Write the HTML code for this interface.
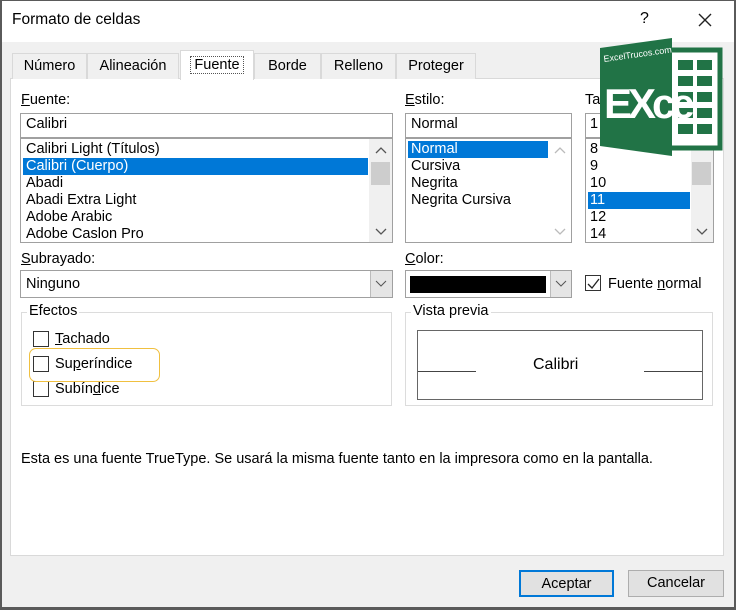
<!DOCTYPE html>
<html><head><meta charset="utf-8"><style>
*{margin:0;padding:0;box-sizing:border-box}
body{width:736px;height:610px;background:#f0f0f0;font-family:"Liberation Sans",sans-serif;font-size:14.5px;color:#000;position:relative;overflow:hidden}
.a{position:absolute;white-space:nowrap}
.box{position:absolute;background:#fff;border:1px solid #a0a0a0}
.tab{position:absolute;top:53px;height:26px;border:1px solid #d9d9d9;border-bottom:none;background:#f0f0f0;text-align:center;line-height:25px}
.hl{position:absolute;background:#0078d7;color:#fff}
.sb{position:absolute;background:#f0f0f0}
.cb{position:absolute;width:16px;height:16px;border:1px solid #333;background:#fff}
.grp{position:absolute;border:1px solid #dcdcdc}
.btn{position:absolute;top:570px;height:27px;border:1px solid #adadad;background:#e1e1e1;text-align:center;line-height:25px}
</style></head><body>
<div class="a" style="left:0;top:0;width:736px;height:42px;background:#fff"></div>
<div class="a" style="left:0;top:0;width:736px;height:610px;border:1px solid #5a5a5a;border-width:1px 2px 3px 2px"></div>
<div class="a" style="left:12px;top:11px;font-size:15.5px">Formato de celdas</div>
<div class="a" style="left:640px;top:10px;font-size:16px">?</div>
<svg class="a" style="left:698px;top:13px" width="14" height="14"><path d="M1 1L13 13M13 1L1 13" stroke="#222" stroke-width="1.4"/></svg>

<div class="a" style="left:10px;top:78px;width:714px;height:478px;background:#fff;border:1px solid #d9d9d9"></div>
<div class="tab" style="left:12px;width:75px">Número</div>
<div class="tab" style="left:87px;width:92px">Alineación</div>
<div class="tab" style="left:180px;width:74px;top:50px;height:30px;background:#fff;line-height:29px"><span style="border:1px dotted #555;padding:0 3px">Fuente</span></div>
<div class="tab" style="left:254px;width:67px">Borde</div>
<div class="tab" style="left:321px;width:75px">Relleno</div>
<div class="tab" style="left:396px;width:80px">Proteger</div>

<div class="a" style="left:21px;top:92px"><u>F</u>uente:</div>
<div class="box" style="left:20px;top:113px;width:373px;height:25px"></div>
<div class="a" style="left:26px;top:116px">Calibri</div>
<div class="box" style="left:20px;top:138px;width:373px;height:105px"></div>
<div class="hl" style="left:23px;top:158px;width:345px;height:17px"></div>
<div class="sb" style="left:369px;top:139px;width:23px;height:103px"></div>
<div class="a" style="left:371px;top:162px;width:19px;height:23px;background:#cdcdcd"></div>
<svg class="a" style="left:375px;top:146px" width="12" height="8"><path d="M1 7L6 2L11 7" fill="none" stroke="#555" stroke-width="1.3"/></svg>
<svg class="a" style="left:375px;top:228px" width="12" height="8"><path d="M1 1L6 6L11 1" fill="none" stroke="#555" stroke-width="1.3"/></svg>
<div class="a" style="left:26px;top:141px;line-height:17px">Calibri Light (Títulos)<br><span style="color:#fff">Calibri (Cuerpo)</span><br>Abadi<br>Abadi Extra Light<br>Adobe Arabic<br>Adobe Caslon Pro</div>

<div class="a" style="left:405px;top:92px"><u>E</u>stilo:</div>
<div class="box" style="left:405px;top:113px;width:167px;height:25px"></div>
<div class="a" style="left:411px;top:116px">Normal</div>
<div class="box" style="left:405px;top:138px;width:167px;height:105px"></div>
<div class="hl" style="left:408px;top:141px;width:140px;height:17px"></div>
<svg class="a" style="left:554px;top:146px" width="12" height="8"><path d="M1 7L6 2L11 7" fill="none" stroke="#bbb" stroke-width="1.3"/></svg>
<svg class="a" style="left:554px;top:228px" width="12" height="8"><path d="M1 1L6 6L11 1" fill="none" stroke="#bbb" stroke-width="1.3"/></svg>
<div class="a" style="left:411px;top:141px;line-height:17px"><span style="color:#fff">Normal</span><br>Cursiva<br>Negrita<br>Negrita Cursiva</div>

<div class="a" style="left:585px;top:92px">Ta</div>
<div class="box" style="left:585px;top:113px;width:129px;height:25px"></div>
<div class="a" style="left:590px;top:116px">1</div>
<div class="box" style="left:585px;top:138px;width:129px;height:105px"></div>
<div class="hl" style="left:588px;top:192px;width:102px;height:17px"></div>
<div class="sb" style="left:691px;top:139px;width:22px;height:103px"></div>
<div class="a" style="left:692px;top:162px;width:19px;height:23px;background:#cdcdcd"></div>
<svg class="a" style="left:696px;top:228px" width="12" height="8"><path d="M1 1L6 6L11 1" fill="none" stroke="#555" stroke-width="1.3"/></svg>
<div class="a" style="left:590px;top:141px;line-height:17px">8<br>9<br>10<br><span style="color:#fff">11</span><br>12<br>14</div>

<svg class="a" style="left:596px;top:36px" width="130" height="122">
<rect x="64" y="14" width="60" height="98" fill="#fff" stroke="#217346" stroke-width="5"/>
<g fill="#217346"><rect x="82" y="24" width="15" height="10"/><rect x="101" y="24" width="15" height="10"/><rect x="82" y="40" width="15" height="10"/><rect x="101" y="40" width="15" height="10"/><rect x="82" y="56" width="15" height="10"/><rect x="101" y="56" width="15" height="10"/><rect x="82" y="72" width="15" height="10"/><rect x="101" y="72" width="15" height="10"/><rect x="82" y="88" width="15" height="10"/><rect x="101" y="88" width="15" height="10"/></g>
<path d="M4 12L76 2V120L4 110Z" fill="#217346"/>
<text x="8" y="26" fill="#fff" font-size="9" font-family="Liberation Sans" transform="rotate(-8 8 26)">ExcelTrucos.com</text>
<text x="8" y="82" fill="#fff" font-size="42" font-weight="bold" font-family="Liberation Sans" letter-spacing="-4">EXce</text>
</svg>

<div class="a" style="left:21px;top:251px"><u>S</u>ubrayado:</div>
<div class="box" style="left:20px;top:270px;width:373px;height:28px;border-color:#a0a0a0"></div>
<div class="a" style="left:26px;top:276px">Ninguno</div>
<div class="a" style="left:370px;top:271px;width:22px;height:26px;background:#e5e5e5;border-left:1px solid #bbb"></div>
<svg class="a" style="left:375px;top:280px" width="12" height="8"><path d="M1 1L6 6L11 1" fill="none" stroke="#555"/></svg>
<div class="a" style="left:405px;top:251px"><u>C</u>olor:</div>
<div class="box" style="left:405px;top:270px;width:167px;height:28px"></div>
<div class="a" style="left:410px;top:276px;width:136px;height:17px;background:#000"></div>
<div class="a" style="left:550px;top:271px;width:21px;height:26px;background:#e5e5e5;border-left:1px solid #bbb"></div>
<svg class="a" style="left:555px;top:280px" width="12" height="8"><path d="M1 1L6 6L11 1" fill="none" stroke="#555"/></svg>
<div class="cb" style="left:585px;top:275px"></div>
<svg class="a" style="left:587px;top:278px" width="13" height="11"><path d="M1 6L5 10L12 1" fill="none" stroke="#222" stroke-width="1.3"/></svg>
<div class="a" style="left:608px;top:276px">Fuente <u>n</u>ormal</div>

<div class="grp" style="left:21px;top:312px;width:371px;height:94px"></div>
<div class="a" style="left:27px;top:303px;background:#fff;padding:0 2px">Efectos</div>
<div class="cb" style="left:33px;top:331px"></div><div class="a" style="left:55px;top:331px"><u>T</u>achado</div>
<div class="cb" style="left:33px;top:356px"></div><div class="a" style="left:55px;top:356px">Su<u>p</u>eríndice</div>
<div class="cb" style="left:33px;top:381px"></div><div class="a" style="left:55px;top:381px">Subín<u>d</u>ice</div>
<div class="a" style="left:29px;top:348px;width:131px;height:34px;border:1.5px solid #f0c040;border-radius:7px"></div>

<div class="grp" style="left:405px;top:312px;width:308px;height:94px"></div>
<div class="a" style="left:411px;top:303px;background:#fff;padding:0 2px">Vista previa</div>
<div class="a" style="left:417px;top:330px;width:286px;height:70px;border:1px solid #666"></div>
<div class="a" style="left:418px;top:371px;width:58px;height:1px;background:#444"></div>
<div class="a" style="left:644px;top:371px;width:58px;height:1px;background:#444"></div>
<div class="a" style="left:533px;top:356px;font-size:16px">Calibri</div>

<div class="a" style="left:21px;top:451px">Esta es una fuente TrueType. Se usará la misma fuente tanto en la impresora como en la pantalla.</div>

<div class="btn" style="left:519px;width:95px;border:2px solid #0078d7">Aceptar</div>
<div class="btn" style="left:628px;width:96px">Cancelar</div>
</body></html>
